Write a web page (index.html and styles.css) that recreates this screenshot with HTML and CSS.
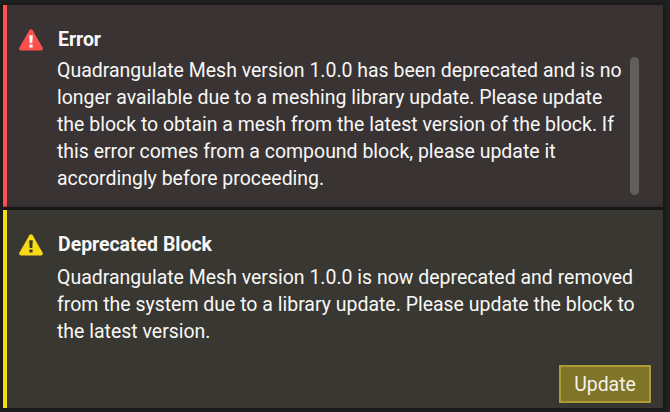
FILE: index.html
```html
<!DOCTYPE html>
<html lang="en"><head><meta charset="utf-8"><title>Block messages</title><link rel="stylesheet" href="styles.css"></head>
<body>
<main class="messages">
<section class="message error">
<svg class="icon" viewBox="0 0 24 22"><path class="sign" d="M10.3 1.3Q12-1 13.7 1.3L23.6 18.7Q24.5 21.3 22 21.5H2Q-.5 21.3.4 18.7Z"/><path class="mark" d="M10.2 6.2h3.6l-.5 7.8h-2.6zM10.4 15.6h3.2v3h-3.2z"/></svg>
<div class="content"><h2>Error</h2>
<p>Quadrangulate Mesh version 1.0.0 has been deprecated and is no<br>longer available due to a meshing library update. Please update<br>the block to obtain a mesh from the latest version of the block. If<br>this error comes from a compound block, please update it<br>accordingly before proceeding.</p></div>
<div class="scrollbar"></div>
</section>
<section class="message warning">
<svg class="icon" viewBox="0 0 24 22"><path class="sign" d="M10.3 1.3Q12-1 13.7 1.3L23.6 18.7Q24.5 21.3 22 21.5H2Q-.5 21.3.4 18.7Z"/><path class="mark" d="M10.2 6.2h3.6l-.5 7.8h-2.6zM10.4 15.6h3.2v3h-3.2z"/></svg>
<div class="content"><h2>Deprecated Block</h2>
<p>Quadrangulate Mesh version 1.0.0 is now deprecated and removed<br>from the system due to a library update. Please update the block to<br>the latest version.</p></div>
<button class="update">Update</button>
</section>
</main>
</body></html>
```

FILE: styles.css
```css
* { box-sizing: border-box; }
body { margin: 0; height: 412px; overflow: hidden; background: #222222; color: #f8f7f7; font-family: Roboto, sans-serif; }
.messages { width: 660px; margin-left: 3px; padding-top: 5px; display: grid; grid-template-rows: 202px 198px; row-gap: 3px; }
.message { display: grid; grid-template-columns: 24px 559px 1fr; column-gap: 14px; padding-left: 12px; border-left: 4px solid #ff4f4f; background: #393433; box-shadow: 0 0 4px 2px #171717; }
.warning { border-color: #f8da14; background: #393732; grid-template-rows: 1fr 38px; padding-bottom: 5px; }
.icon { width: 24px; height: 22px; margin-top: 24px; }
.sign { fill: #ff4f4f; }
.mark { fill: #fff; }
.warning .sign { fill: #f8da14; }
.warning .mark { fill: #393732; }
h2 { margin: 23px 0 0 1px; font-size: 19.45px; line-height: 24px; font-weight: 700; white-space: nowrap; }
p { margin: 5px 0 0; font-size: 19.48px; line-height: 27px; white-space: nowrap; }
.warning p { margin-top: 7px; }
.scrollbar { width: 9px; height: 138px; margin-top: 52px; border-radius: 4.5px; background: #625e5d; }
.update { grid-column: 1 / -1; justify-self: end; margin-right: 12px; width: 92px; height: 38px; padding: 0; border: 2px solid #ac9a35; background: #807428; color: #f4f2e8; font: 19.45px Roboto, sans-serif; }
```
